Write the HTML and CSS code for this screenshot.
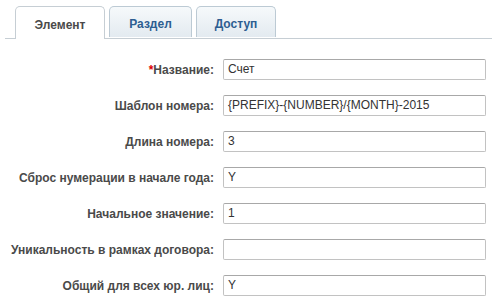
FILE: index.html
```html
<!DOCTYPE html>
<html lang="ru">
<head>
<meta charset="utf-8">
<link rel="stylesheet" href="styles.css">
</head>
<body>
<div class="tabs">
  <div class="tab active">Элемент</div>
  <div class="tab wide">Раздел</div>
  <div class="tab">Доступ</div>
</div>
<div class="form">
  <label class="lbl"><span class="req">*</span>Название:</label>
  <div class="field">Счет</div>
  <label class="lbl">Шаблон номера:</label>
  <div class="field">{PREFIX}-{NUMBER}/{MONTH}-2015</div>
  <label class="lbl">Длина номера:</label>
  <div class="field">3</div>
  <label class="lbl">Сброс нумерации в начале года:</label>
  <div class="field">Y</div>
  <label class="lbl">Начальное значение:</label>
  <div class="field">1</div>
  <label class="lbl">Уникальность в рамках договора:</label>
  <div class="field"></div>
  <label class="lbl">Общий для всех юр. лиц:</label>
  <div class="field">Y</div>
</div>
</body>
</html>
```
FILE: styles.css
```css
html, body { margin: 0; padding: 0; background: #fff; }
body { font-family: "Liberation Sans", Arial, sans-serif; width: 492px; height: 304px; overflow: hidden; }
.tabs {
  display: flex;
  gap: 4px;
  margin: 6px 0 0 5px;
  padding-left: 10px;
  border-bottom: 1px solid #c6ced4;
  height: 32px;
}
.tab {
  width: 80px;
  height: 31px;
  box-sizing: border-box;
  border: 1px solid #bccad4;
  border-bottom: none;
  border-radius: 5px 5px 0 0;
  background: linear-gradient(#f6f9fb, #e3eaf0);
  color: #2d5e91;
  font-size: 12px;
  font-weight: bold;
  display: flex;
  align-items: center;
  justify-content: center;
  padding-top: 3px;
}
.tab.wide { width: 83px; }
.tab.active {
  width: 90px;
  height: 33px;
  background: #fff;
  color: #4a4a4a;
  border-color: #c6ced4;
}
.form {
  display: grid;
  grid-template-columns: 214px 264px;
  column-gap: 8px;
  row-gap: 15px;
  margin-top: 20px;
  align-items: center;
}
.lbl {
  text-align: right;
  font-size: 12px;
  font-weight: bold;
  color: #4a4a4a;
  white-space: nowrap;
}
.req { color: #d00; }
.field {
  height: 21px;
  box-sizing: border-box;
  border: 1px solid #c2c2c2;
  border-top-color: #a8a8a8;
  border-radius: 2px;
  padding: 0 4px;
  font-size: 12px;
  line-height: 19px;
  color: #333;
  margin-left: 1px;
}
```
